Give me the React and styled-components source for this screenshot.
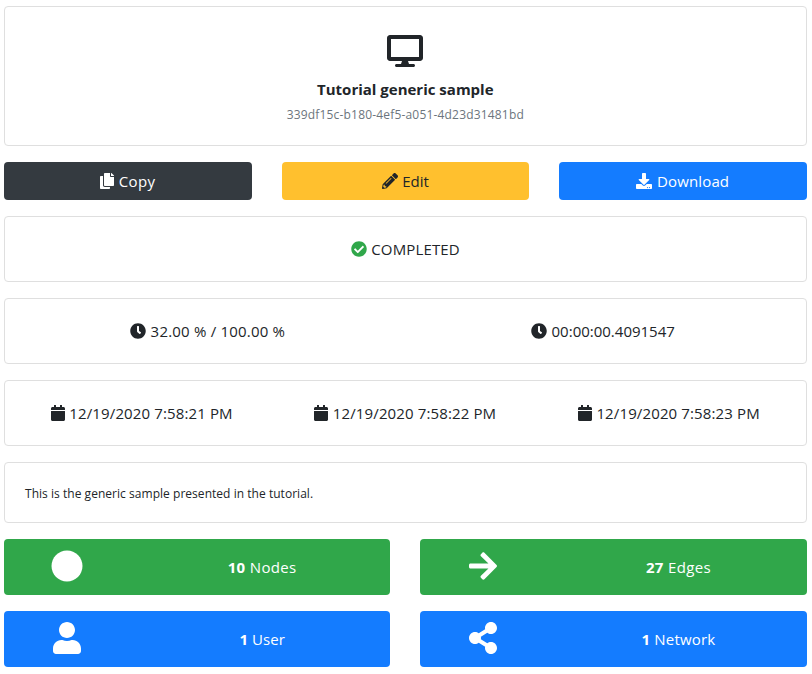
import React from "react";
import styled, { createGlobalStyle } from "styled-components";
import {
  FaCopy, FaPencilAlt, FaDownload, FaCheckCircle, FaClock, FaCalendar,
  FaCircle, FaUser, FaShareAlt, FaDesktop, FaArrowRight,
} from "react-icons/fa";

const GlobalStyle = createGlobalStyle`
  *, *::before, *::after { box-sizing: border-box; }
  body {
    margin: 0;
    background: #fff;
    color: #212529;
    font-family: "Open Sans", "Noto Sans", sans-serif;
    font-size: 15px;
    line-height: 24px;
  }
`;

const Page = styled.main`
  display: flex;
  flex-direction: column;
  gap: 16px;
  padding: 6px 5.4px 7px 4px;
`;

const Card = styled.section`
  height: ${(p) => p.$height || 66}px;
  border: 1px solid #dfdfdf;
  border-radius: 4px;
  padding: 20px;
`;

const Header = styled(Card)`
  display: flex;
  flex-direction: column;
  align-items: center;
  padding-top: 28px;
`;

const Title = styled.h1`
  margin: 10px 0 0;
  font-size: 15px;
  font-weight: 700;
  line-height: 24px;
`;

const Identifier = styled.div`
  margin-top: 2px;
  color: #6c757d;
  font-size: 12px;
`;

const Columns = styled.div`
  display: grid;
  grid-template-columns: repeat(${(p) => p.$count}, minmax(0, 1fr));
  gap: ${(p) => p.$gap ?? 30}px;
`;

const Facts = styled(Columns)`
  margin: 0 -15px;
`;

const Item = styled.div`
  display: flex;
  align-items: center;
  justify-content: center;
  gap: 4.5px;
  height: 24px;
`;

const tones = {
  dark: "background: #343a40; color: #fff;",
  warning: "background: #ffc02e; color: #212529;",
  primary: "background: #147cff; color: #fff;",
  success: "background: #30a74a; color: #fff;",
};

const Button = styled.button`
  display: flex;
  align-items: center;
  justify-content: center;
  gap: 4.5px;
  height: 38px;
  padding: 0;
  border: 0;
  border-radius: 4px;
  font: inherit;
  ${(p) => tones[p.$tone]}
`;

const Stat = styled.div`
  display: grid;
  grid-template-columns: 126px minmax(0, 1fr);
  align-items: center;
  justify-items: center;
  height: 56px;
  padding-bottom: 2px;
  border-radius: 4px;
  ${(p) => tones[p.$tone]}
`;

const StatLabel = styled.div`
  padding: 2px 0 0 4px;
`;

const Text = styled.span`
  white-space: pre;
  letter-spacing: ${(p) => p.$track || 0}px;
`;

const Glyph = styled.span`
  display: flex;
  flex: none;
  color: ${(p) => p.$color || "inherit"};
  svg {
    width: ${(p) => p.$w || 16}px;
    height: ${(p) => p.$h || 16}px;
  }
`;

const Description = styled.p`
  margin: 0;
  padding-top: 1px;
  font-size: 12px;
  line-height: 19px;
`;

const dates = ["12/19/2020 7:58:21 PM", "12/19/2020 7:58:22 PM", "12/19/2020 7:58:23 PM"];

const stats = [
  { tone: "success", icon: FaCircle, w: 32, count: 10, label: "Nodes", track: 0.35 },
  { tone: "success", icon: FaArrowRight, w: 28, count: 27, label: "Edges", track: 0.35 },
  { tone: "primary", icon: FaUser, w: 28, count: 1, label: "User", track: 0.05 },
  { tone: "primary", icon: FaShareAlt, w: 28, count: 1, label: "Network", track: 0.2 },
];

export default function App() {
  return (
    <>
      <GlobalStyle />
      <Page>
        <Header $height={140}>
          <Glyph $w={36} $h={32}><FaDesktop /></Glyph>
          <Title><Text>Tutorial generic sample</Text></Title>
          <Identifier><Text $track={0.18}>339df15c-b180-4ef5-a051-4d23d31481bd</Text></Identifier>
        </Header>

        <Columns $count={3}>
          <Button $tone="dark"><Glyph $w={14}><FaCopy /></Glyph><Text $track={0.35}>Copy</Text></Button>
          <Button $tone="warning"><Glyph><FaPencilAlt /></Glyph><Text>Edit</Text></Button>
          <Button $tone="primary"><Glyph><FaDownload /></Glyph><Text $track={0.15}>Download</Text></Button>
        </Columns>

        <Card>
          <Item><Glyph $color="#30a74a"><FaCheckCircle /></Glyph><Text $track={0.15}>COMPLETED</Text></Item>
        </Card>

        <Card>
          <Facts $count={2} $gap={0}>
            <Item><Glyph><FaClock /></Glyph><Text $track={0.2}>32.00 % / 100.00 %</Text></Item>
            <Item><Glyph><FaClock /></Glyph><Text>00:00:00.4091547</Text></Item>
          </Facts>
        </Card>

        <Card>
          <Facts $count={3} $gap={0}>
            {dates.map((date) => (
              <Item key={date}><Glyph $w={14}><FaCalendar /></Glyph><Text $track={0.13}>{date}</Text></Item>
            ))}
          </Facts>
        </Card>

        <Card $height={61}>
          <Description><Text $track={0.035}>This is the generic sample presented in the tutorial.</Text></Description>
        </Card>

        <Columns $count={2}>
          {stats.slice(0, 2).map(({ icon: Icon, ...s }) => (
            <Stat key={s.label} $tone={s.tone}>
              <Glyph $w={s.w} $h={32}><Icon /></Glyph>
              <StatLabel><Text $track={s.track}><b>{s.count}</b> {s.label}</Text></StatLabel>
            </Stat>
          ))}
        </Columns>
        <Columns $count={2}>
          {stats.slice(2).map(({ icon: Icon, ...s }) => (
            <Stat key={s.label} $tone={s.tone}>
              <Glyph $w={s.w} $h={32}><Icon /></Glyph>
              <StatLabel><Text $track={s.track}><b>{s.count}</b> {s.label}</Text></StatLabel>
            </Stat>
          ))}
        </Columns>
      </Page>
    </>
  );
}
